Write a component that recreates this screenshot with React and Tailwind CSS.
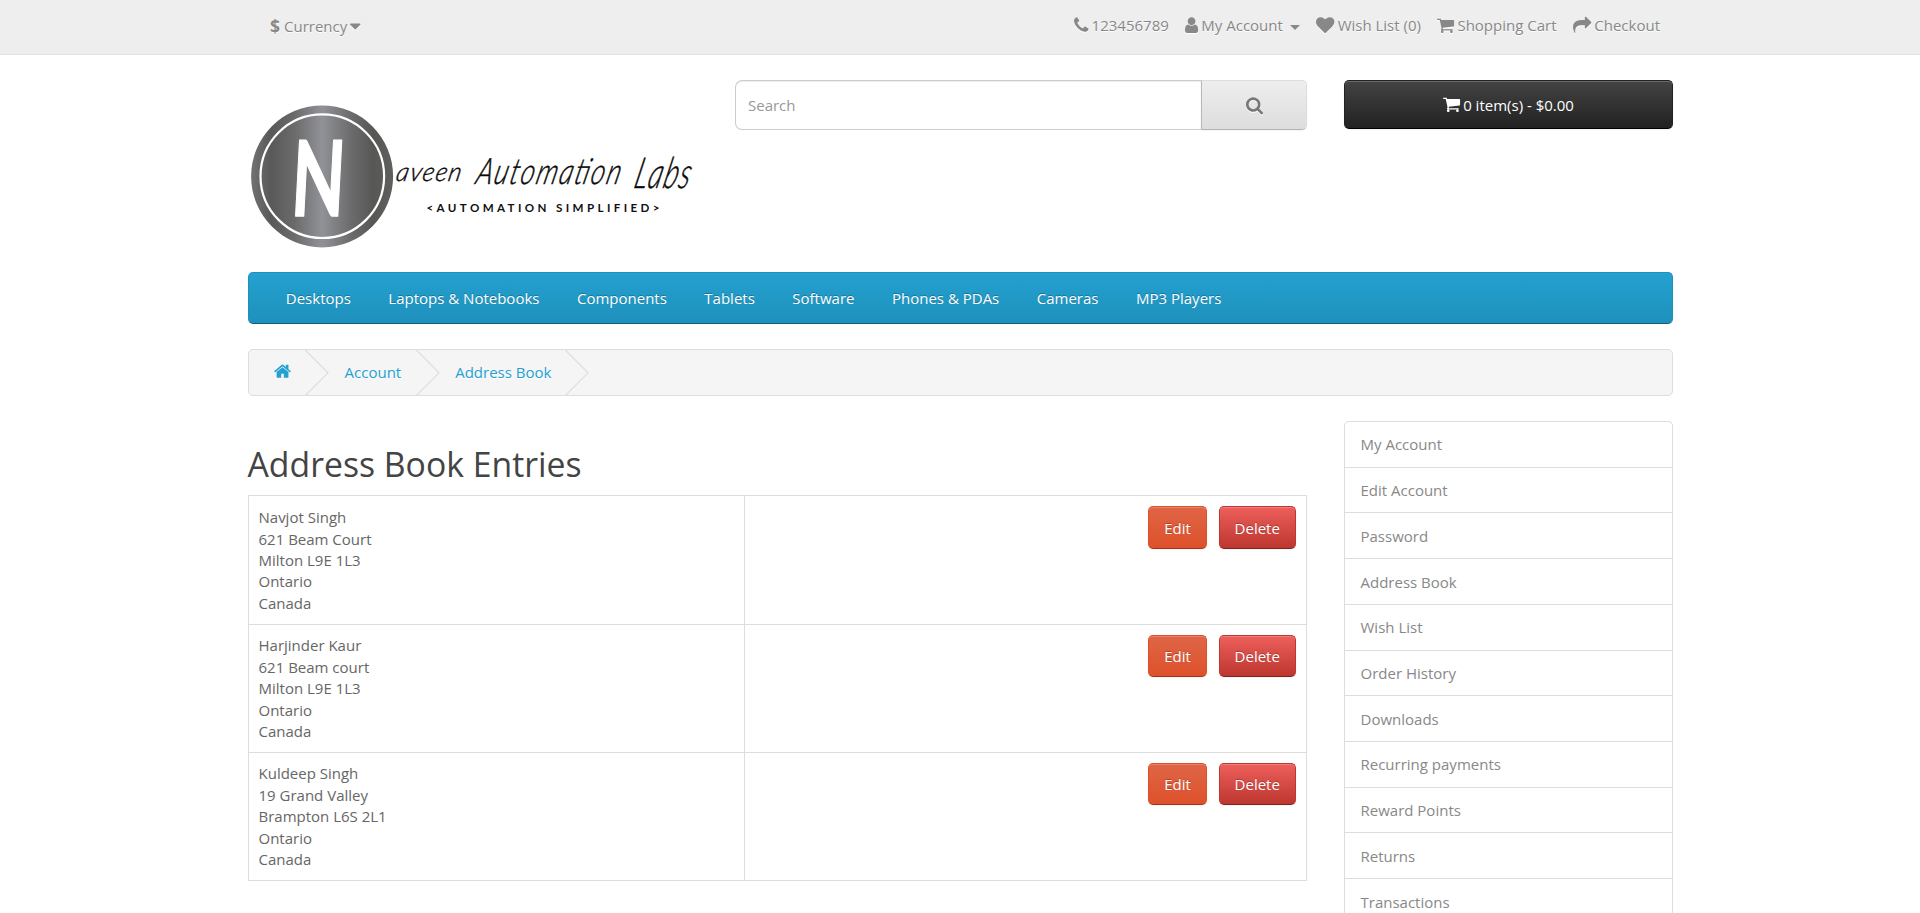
import React from "react";

const ICONS = {
  phone: [1408, "M1408 296q0 -27 -10 -70.5t-21 -68.5q-21 -50 -122 -106q-94 -51 -186 -51q-27 0 -52.5 3.5t-57.5 12.5t-47.5 14.5t-55.5 20.5t-49 18q-98 35 -175 83q-128 79 -264.5 215.5t-215.5 264.5q-48 77 -83 175q-3 9 -18 49t-20.5 55.5t-14.5 47.5t-12.5 57.5t-3.5 52.5q0 92 51 186q56 101 106 122q25 11 68.5 21t70.5 10q14 0 21 -3q18 -6 53 -76q11 -19 30 -54t35 -63.5t31 -53.5q3 -4 17.5 -25t21.5 -35.5t7 -28.5q0 -20 -28.5 -50t-62 -55t-62 -53t-28.5 -46q0 -9 5 -22.5t8.5 -20.5t14 -24t11.5 -19q76 -137 174 -235t235 -174q2 -1 19 -11.5t24 -14t20.5 -8.5t22.5 -5q18 0 46 28.5t53 62t55 62t50 28.5q14 0 28.5 -7t35.5 -21.5t25 -17.5q25 -15 53.5 -31t63.5 -35t54 -30q70 -35 76 -53q3 -7 3 -21z"],
  cart: [1664, "M640 0q0 -52 -38 -90t-90 -38t-90 38t-38 90t38 90t90 38t90 -38t38 -90zM1536 0q0 -52 -38 -90t-90 -38t-90 38t-38 90t38 90t90 38t90 -38t38 -90zM1664 1088v-512q0 -24 -16.5 -42.5t-40.5 -21.5l-1044 -122q13 -60 13 -70q0 -16 -24 -64h920q26 0 45 -19t19 -45t-19 -45t-45 -19h-1024q-26 0 -45 19t-19 45q0 11 8 31.5t16 36t21.5 40t15.5 29.5l-177 823h-204q-26 0 -45 19t-19 45t19 45t45 19h256q16 0 28.5 -6.5t19.5 -15.5t13 -24.5t8 -26t5.5 -29.5t4.5 -26h1201q26 0 45 -19t19 -45z"],
  heart: [1792, "M896 -128q-26 0 -44 18l-624 602q-10 8 -27.5 26t-55.5 65.5t-68 97.5t-53.5 121t-23.5 138q0 220 127 344t351 124q62 0 126.5 -21.5t120 -58t95.5 -68.5t76 -68q36 36 76 68t95.5 68.5t120 58t126.5 21.5q224 0 351 -124t127 -344q0 -221 -229 -450l-623 -600q-18 -18 -44 -18z"],
  user: [1280, "M1280 137q0 -109 -62.5 -187t-150.5 -78h-854q-88 0 -150.5 78t-62.5 187q0 85 8.5 160.5t31.5 152t58.5 131t94 89t134.5 34.5q131 -128 313 -128t313 128q76 0 134.5 -34.5t94 -89t58.5 -131t31.5 -152t8.5 -160.5zM1024 1024q0 -159 -112.5 -271.5t-271.5 -112.5t-271.5 112.5t-112.5 271.5t112.5 271.5t271.5 112.5t271.5 -112.5t112.5 -271.5z"],
  share: [1792, "M1792 896q0 -26 -19 -45l-512 -512q-19 -19 -45 -19t-45 19t-19 45v256h-224q-98 0 -175.5 -6t-154 -21.5t-133 -42.5t-105.5 -69.5t-80 -101t-48.5 -138.5t-17.5 -181q0 -55 5 -123q0 -6 2.5 -23.5t2.5 -26.5q0 -15 -8.5 -25t-23.5 -10q-16 0 -28 17q-7 9 -13 22t-13.5 30t-10.5 24q-127 285 -127 451q0 199 53 333q162 403 875 403h224v256q0 26 19 45t45 19t45 -19l512 -512q19 -19 19 -45z"],
  search: [1664, "M1152 704q0 185 -131.5 316.5t-316.5 131.5t-316.5 -131.5t-131.5 -316.5t131.5 -316.5t316.5 -131.5t316.5 131.5t131.5 316.5zM1664 -128q0 -52 -38 -90t-90 -38q-54 0 -90 38l-343 342q-179 -124 -399 -124q-143 0 -273.5 55.5t-225 150t-150 225t-55.5 273.5t55.5 273.5t150 225t225 150t273.5 55.5t273.5 -55.5t225 -150t150 -225t55.5 -273.5q0 -220 -124 -399l343 -343q37 -37 37 -90z"],
  home: [1664, "M1408 544v-480q0 -26 -19 -45t-45 -19h-384v384h-256v-384h-384q-26 0 -45 19t-19 45v480q0 1 .5 3t.5 3l575 474l575 -474q1 -2 1 -6zM1631 613l-62 -74q-8 -9 -21 -11h-3q-13 0 -21 7l-692 577l-692 -577q-12 -8 -24 -7q-13 2 -21 11l-62 74q-8 10 -7 23.5t11 21.5l719 599q32 26 76 26t76 -26l244 -204v195q0 14 9 23t23 9h192q14 0 23 -9t9 -23v-408l219 -182q10 -8 11 -21.5t-7 -23.5z"],
  caret: [1024, "M1024 832q0 -26 -19 -45l-448 -448q-19 -19 -45 -19t-45 19l-448 448q-19 19 -19 45t19 45t45 19h896q26 0 45 -19t19 -45z"],
};

function Icon({ name, className = "" }) {
  const [width, d] = ICONS[name];
  return (
    <svg
      viewBox={`0 -1536 ${width} 1792`}
      className={`h-[18.4px] w-auto shrink-0 overflow-visible fill-current ${className}`}
      aria-hidden="true"
    >
      <path d={d} transform="scale(1,-1)" />
    </svg>
  );
}

function TopLink({ icon, label, caret }) {
  return (
    <a className="flex items-center gap-[3px]">
      <Icon name={icon} className="-mt-[1px] drop-shadow-[0_1px_0_#fff]" />
      <span>{label}</span>
      {caret && (
        <span className="mt-[4px] ml-[4px] border-x-[5px] border-t-[5px] border-x-transparent border-t-[#888]" />
      )}
    </a>
  );
}

function TopBar() {
  return (
    <nav className="h-[55px] border-b border-[#e2e2e2] bg-[#eeeeee] text-[#888] [text-shadow:0_1px_0_#fff]">
      <div className="mx-auto flex w-[1425px] justify-between pr-[12.5px] pl-[22.5px]">
        <div className="mt-[16px] flex h-[21px] items-center">
          <strong className="-mt-[2px] mr-[4px] text-[17.5px] leading-[20px] font-bold">$</strong>
          <span>Currency</span>
          <Icon name="caret" className="ml-[3px] drop-shadow-[0_1px_0_#fff]" />
        </div>
        <div className="mt-[15px] flex h-[21px] items-center gap-[16.4px]">
          <TopLink icon="phone" label="123456789" />
          <TopLink icon="user" label="My Account" caret />
          <TopLink icon="heart" label="Wish List (0)" />
          <TopLink icon="cart" label="Shopping Cart" />
          <TopLink icon="share" label="Checkout" />
        </div>
      </div>
    </nav>
  );
}

function Logo() {
  return (
    <svg width="450" height="150" viewBox="247.5 101 450 150" className="block" role="img">
      <defs>
        <linearGradient id="disc" x1="0" x2="1" y1="0" y2="0">
          <stop offset="0" stopColor="#727274" />
          <stop offset="0.14" stopColor="#595958" />
          <stop offset="0.3" stopColor="#6a6a6b" />
          <stop offset="0.5" stopColor="#919297" />
          <stop offset="0.7" stopColor="#6c6c6d" />
          <stop offset="0.86" stopColor="#575756" />
          <stop offset="1" stopColor="#5f5f5e" />
        </linearGradient>
      </defs>
      <circle cx="321.6" cy="176.4" r="71" fill="url(#disc)" />
      <circle cx="321.8" cy="176.2" r="61.8" fill="none" stroke="#fff" strokeWidth="2.2" />
      <text
        transform="translate(289.5 215.5) skewX(-3) scale(0.66 1)"
        fontFamily="Lato, sans-serif"
        fontSize="105"
        fontWeight="700"
        fill="#fff"
        stroke="#fff"
        strokeWidth="1.5"
        strokeLinejoin="round"
      >
        N
      </text>
      <g fontFamily="Lato, sans-serif" fontStyle="italic" fontWeight="300" fill="#0a0a0a" stroke="#0a0a0a" strokeWidth="0.4">
        <text transform="translate(394.5 181) skewX(-12) scale(1 1.05)" fontSize="25" textLength="65" lengthAdjust="spacing">aveen</text>
        <text transform="translate(474 184) skewX(-14) scale(0.93 1.25)" fontSize="29" textLength="155" lengthAdjust="spacing">Automation</text>
        <text transform="translate(632 188) skewX(-14) scale(0.84 1.3)" fontSize="33" textLength="66" lengthAdjust="spacing">Labs</text>
      </g>
      <text x="426" y="211.8" fontFamily="Lato, sans-serif" fontSize="11.6" fontWeight="700" fill="#111" textLength="233" lengthAdjust="spacing">
        &lt;AUTOMATION SIMPLIFIED&gt;
      </text>
    </svg>
  );
}

function Header() {
  return (
    <header className="mx-auto flex h-[192px] w-[1425px] items-start">
      <div className="w-[487.5px] shrink-0 pt-[21px]">
        <Logo />
      </div>
      <div className="flex h-[50px] w-[572px] shrink-0">
        <input
          placeholder="Search"
          className="h-[50px] w-[466px] rounded-l-[7px] border border-r-0 border-[#ccc] bg-white px-[12px] text-[15px] shadow-[inset_0_1px_1px_rgba(0,0,0,0.075)] outline-none placeholder:text-[#999]"
        />
        <button className="flex h-[50px] w-[106px] items-center justify-center rounded-r-[5px] border border-t-[#dddddd] border-r-[#dddddd] border-b-[#b3b3b3] border-l-[#b7b7b7] bg-linear-to-b from-[#eeeeee] to-[#dddddd] pt-[1px] pl-[1px] text-[#777] shadow-[0_1px_2px_rgba(0,0,0,0.05)]">
          <Icon name="search" className="drop-shadow-[0_1px_0_#fff]" />
        </button>
      </div>
      <button className="ml-auto flex h-[49px] w-[329px] items-center justify-center gap-[3px] rounded-[5px] border border-[#222] border-b-black bg-linear-to-b from-[#444] to-[#222] pt-[2px] pl-[1px] text-white shadow-[inset_0_1px_0_rgba(255,255,255,0.2),0_1px_2px_rgba(0,0,0,0.05)]">
        <Icon name="cart" className="-mt-[2px]" />
        <span>0 item(s) - $0.00</span>
      </button>
    </header>
  );
}

const MENU = ["Desktops", "Laptops & Notebooks", "Components", "Tablets", "Software", "Phones & PDAs", "Cameras", "MP3 Players"];

function MainMenu() {
  return (
    <nav className="mx-auto flex h-[52px] w-[1425px] items-center gap-[37.5px] rounded-[5px] border border-[#1f90bb] border-b-[#145e7a] bg-linear-to-b from-[#23a1d1] to-[#1f90bb] pl-[37.3px] text-white [text-shadow:0_-1px_0_rgba(0,0,0,0.25)]">
      {MENU.map((m) => (
        <a key={m} className="mt-[1px]">{m}</a>
      ))}
    </nav>
  );
}

function Chevron() {
  return (
    <svg width="24" height="46" viewBox="0 0 24 46" className="shrink-0" aria-hidden="true">
      <path d="M0.3 0L23 22.8L0.3 45.6" fill="none" stroke="#ddd" strokeWidth="1.2" />
    </svg>
  );
}

function Breadcrumb() {
  return (
    <div className="mx-auto mt-[25px] flex h-[47px] w-[1425px] items-center overflow-hidden rounded-[5px] border border-[#ddd] bg-[#f5f5f5] pl-[25px] text-[#23a1d1] [text-shadow:0_1px_0_#fff]">
      <Icon name="home" className="-mt-[2px]" />
      <span className="ml-[14.5px] flex"><Chevron /></span>
      <a className="ml-[15.5px]">Account</a>
      <span className="ml-[14.5px] flex"><Chevron /></span>
      <a className="ml-[15.5px]">Address Book</a>
      <span className="ml-[14px] flex"><Chevron /></span>
    </div>
  );
}

const ADDRESSES = [
  ["Navjot Singh", "621 Beam Court", "Milton L9E 1L3", "Ontario", "Canada"],
  ["Harjinder Kaur", "621 Beam court", "Milton L9E 1L3", "Ontario", "Canada"],
  ["Kuldeep Singh", "19 Grand Valley", "Brampton L6S 2L1", "Ontario", "Canada"],
];

function AddressRow({ lines }) {
  return (
    <div className="flex h-[128.15px] border-b border-[#ddd]">
      <div className="w-[496px] border-r border-[#ddd] pt-[10.6px] pl-[10px]">
        {lines.map((l) => (
          <div key={l}>{l}</div>
        ))}
      </div>
      <div className="flex flex-1 items-start justify-end gap-[12px] pt-[10px] pr-[10px] text-white [text-shadow:0_-1px_0_rgba(0,0,0,0.25)]">
        <a className="flex h-[42.5px] w-[59px] items-center justify-center rounded-[5px] border border-[#dd512a] border-b-[#a03515] bg-linear-to-b from-[#df6546] to-[#dd512a] pt-[1.5px] pl-[1px] shadow-[inset_0_1px_0_rgba(255,255,255,0.2),0_1px_2px_rgba(0,0,0,0.05)]">Edit</a>
        <a className="flex h-[42.5px] w-[77px] items-center justify-center rounded-[5px] border border-[#bd362f] border-b-[#802420] bg-linear-to-b from-[#ee5f5b] to-[#bd362f] pt-[1.5px] pl-[0.5px] shadow-[inset_0_1px_0_rgba(255,255,255,0.2),0_1px_2px_rgba(0,0,0,0.05)]">Delete</a>
      </div>
    </div>
  );
}

const ACCOUNT_LINKS = ["My Account", "Edit Account", "Password", "Address Book", "Wish List", "Order History", "Downloads", "Recurring payments", "Reward Points", "Returns", "Transactions"];

export default function App() {
  return (
    <div className="h-[913px] w-full overflow-hidden bg-white font-['Open_Sans',sans-serif] text-[15px] leading-[21.43px] text-[#666]">
      <TopBar />
      <div className="h-[25px]" />
      <Header />
      <MainMenu />
      <Breadcrumb />
      <div className="mx-auto mt-[25px] flex w-[1425px] items-start justify-between">
        <main className="w-[1059px] pt-[25.4px]">
          <h1 className="mb-[12px] text-[33.75px] leading-[37.1px] text-[#444]">Address Book Entries</h1>
          <div className="border border-b-0 border-[#ddd]">
            {ADDRESSES.map((a) => (
              <AddressRow key={a[0]} lines={a} />
            ))}
          </div>
        </main>
        <aside className="w-[329px] rounded-t-[5px] border border-b-0 border-[#ddd] text-[#888]">
          {ACCOUNT_LINKS.map((l) => (
            <a key={l} className="flex h-[45.71875px] items-center border-b border-[#ddd] pt-[1.5px] pl-[16px]">{l}</a>
          ))}
        </aside>
      </div>
    </div>
  );
}
